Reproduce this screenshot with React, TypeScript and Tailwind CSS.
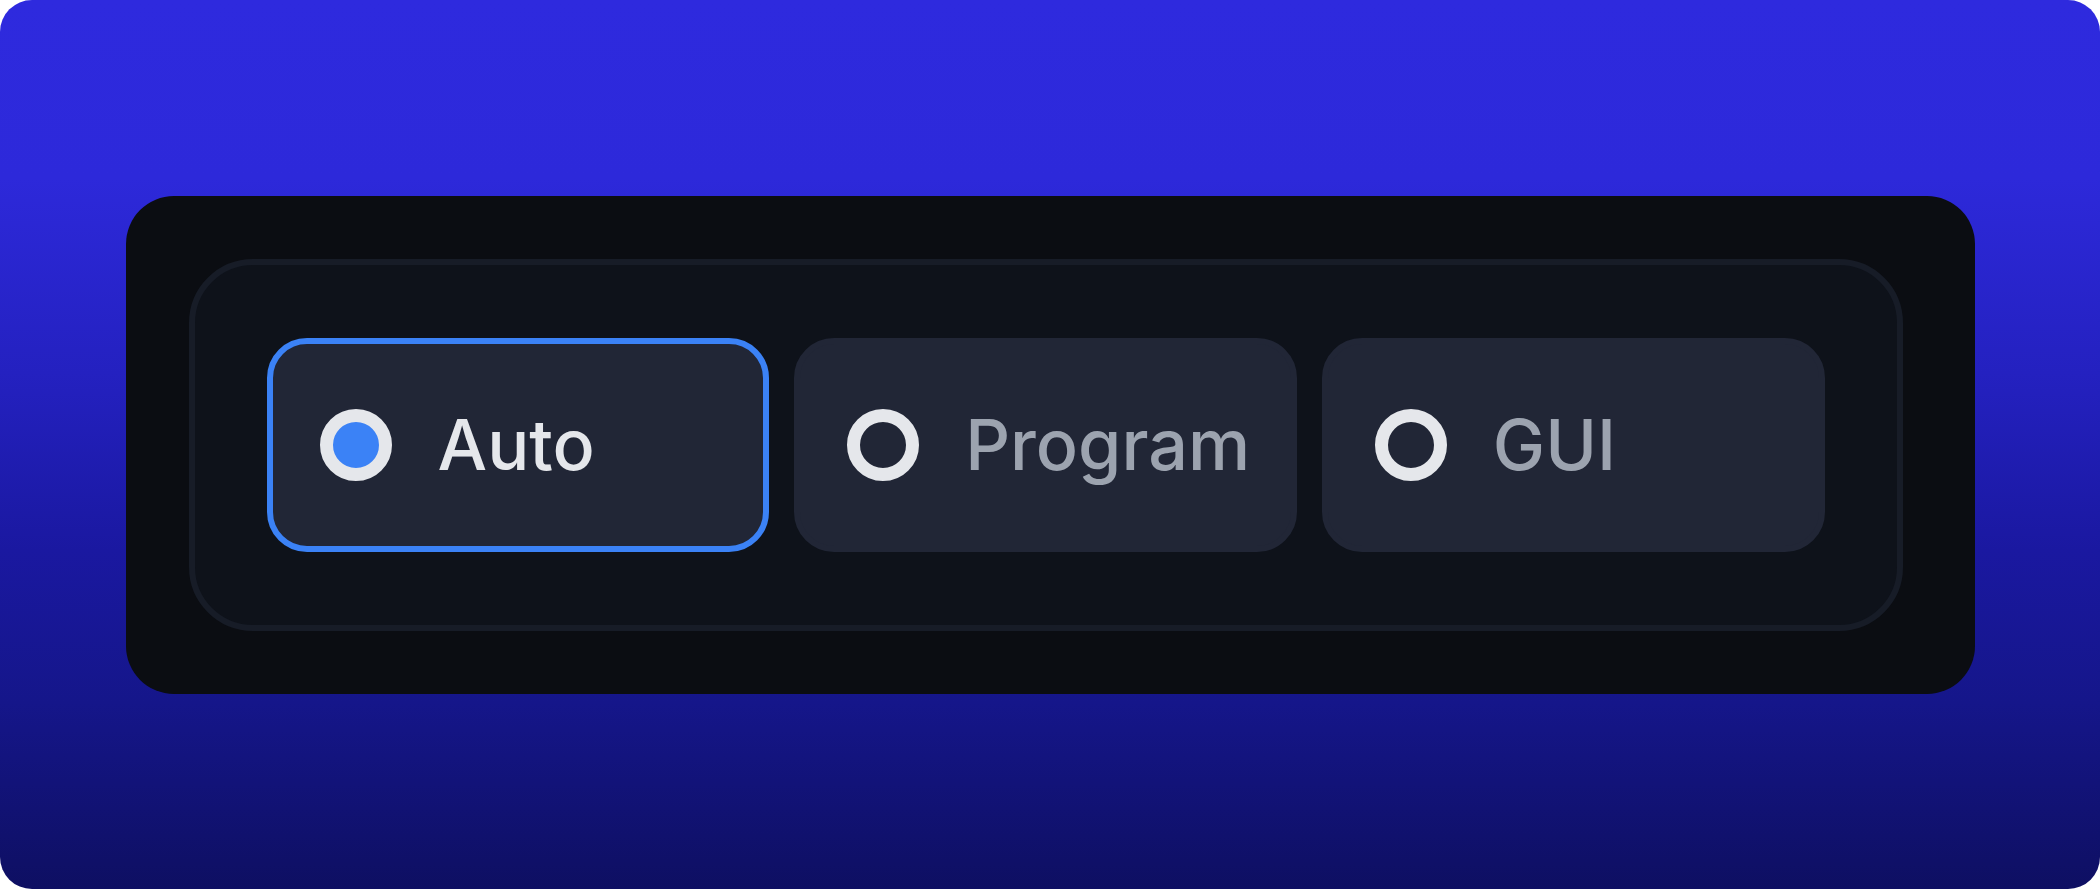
import { useState } from 'react'

type Mode = 'auto' | 'program' | 'gui'

const options: { id: Mode; label: string }[] = [
  { id: 'auto', label: 'Auto' },
  { id: 'program', label: 'Program' },
  { id: 'gui', label: 'GUI' },
]

function RadioCard({
  label,
  checked,
  onSelect,
}: {
  label: string
  checked: boolean
  onSelect: () => void
}) {
  return (
    <button
      type="button"
      role="radio"
      aria-checked={checked}
      onClick={onSelect}
      className={`flex h-[214px] w-[503px] items-center gap-[46px] rounded-[40px] border-[6px] bg-[#212636] pl-[47px] ${
        checked ? 'border-[#3b82f6]' : 'border-[#212636]'
      }`}
    >
      {/* radio ring */}
      <span
        className={`h-[72px] w-[72px] shrink-0 rounded-full border-[13px] border-[#e5e7eb] ${
          checked ? 'bg-[#3b82f6]' : 'bg-transparent'
        }`}
      />
      <span
        className={`text-[70px] font-medium leading-none ${
          checked ? 'text-[#e5e7eb]' : 'text-[#9ca3af]'
        }`}
      >
        {label}
      </span>
    </button>
  )
}

export default function App() {
  const [mode, setMode] = useState<Mode>('auto')

  return (
    <div className="h-[889px] w-[2100px] bg-white font-['Inter',sans-serif]">
      <div className="flex h-full w-full items-center justify-center rounded-[32px] bg-[linear-gradient(180deg,#2e2ade_0%,#2d29da_20%,#2421c0_42%,#1a18a0_62%,#15168a_79%,#0e0f62_100%)]">
        <div className="h-[498px] w-[1849px] rounded-[48px] bg-[#0b0d12] p-[63px]">
          <div
            role="radiogroup"
            className="flex w-[1714px] gap-[25px] rounded-[64px] border-[6px] border-[#171c27] bg-[#0e121a] px-[72px] py-[73px]"
          >
            {options.map((opt) => (
              <RadioCard
                key={opt.id}
                label={opt.label}
                checked={mode === opt.id}
                onSelect={() => setMode(opt.id)}
              />
            ))}
          </div>
        </div>
      </div>
    </div>
  )
}
